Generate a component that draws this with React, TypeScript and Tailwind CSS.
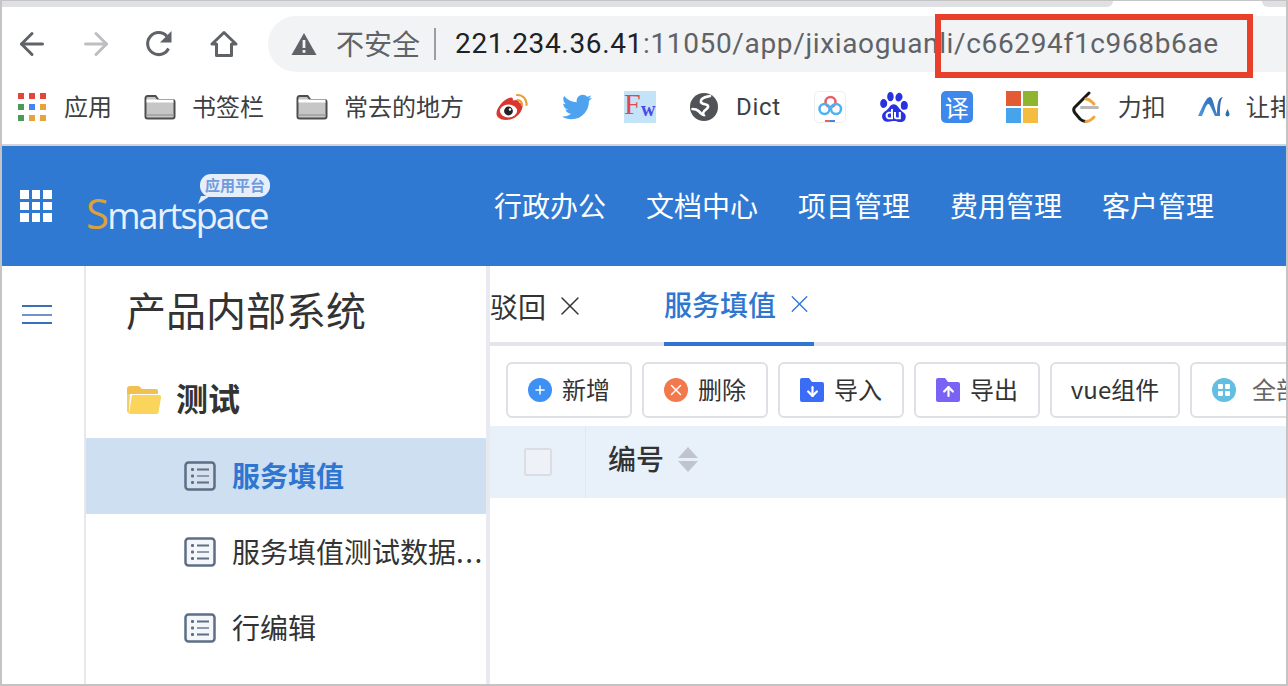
import { ArrowLeft, ArrowRight, X, Plus, ArrowDown, ArrowUp } from 'lucide-react';
import { FaTwitter } from 'react-icons/fa';
import { SiBaidu } from 'react-icons/si';

const cjk = { fontFamily: '"Noto Sans CJK SC", "Liberation Sans", sans-serif' };

function AppsIcon() {
  const colors = ['#e2483a', '#e2483a', '#e2483a', '#4c9a5a', '#4285f4', '#e8a33a', '#4c9a5a', '#e8a33a', '#e8a33a'];
  return (
    <div className="grid grid-cols-3 gap-[5px] w-[28px] shrink-0">
      {colors.map((c, i) => (
        <div key={i} className="w-[6px] h-[6px]" style={{ backgroundColor: c }} />
      ))}
    </div>
  );
}

function FolderIcon() {
  return (
    <svg width="32" height="26" viewBox="0 0 32 26" className="shrink-0">
      <path d="M1.5 4a2 2 0 0 1 2-2h8l3 4h14a2 2 0 0 1 2 2v14.5a2 2 0 0 1-2 2h-25a2 2 0 0 1-2-2z" fill="#c6c6c6" stroke="#4d4d4d" strokeWidth="2" />
      <path d="M2.5 7h27" stroke="#fff" strokeWidth="3" />
      <path d="M2.5 21h27" stroke="#a8a8a8" strokeWidth="2" />
    </svg>
  );
}

function ListIcon({ dark }: { dark?: boolean }) {
  return (
    <svg width="32" height="30" viewBox="0 0 32 30" className="shrink-0">
      <rect x="1.5" y="1.5" width="29" height="27" rx="3" fill={dark ? '#d5e1ef' : '#f4f6f9'} stroke="#5c6f86" strokeWidth="2.5" />
      <g fill="#5c6f86">
        <rect x="7" y="7" width="3" height="3" rx="1" />
        <rect x="7" y="13.5" width="3" height="3" rx="1" />
        <rect x="7" y="20" width="3" height="3" rx="1" />
        <rect x="13" y="7.5" width="12" height="2" />
        <rect x="13" y="14" width="12" height="2" fill="#8d9bad" />
        <rect x="13" y="20.5" width="12" height="2" />
      </g>
    </svg>
  );
}

function ToolButton({ icon, label, w }: { icon?: React.ReactNode; label: string; w: string }) {
  return (
    <div className={`${w} h-[56px] shrink-0 flex items-center justify-center gap-[10px] bg-white border-2 border-[#dfe0e6] rounded-[6px] text-[24px] text-[#333]`}>
      {icon}
      <span className="pb-[3px]">{label}</span>
    </div>
  );
}

function FileIcon({ color, up }: { color: string; up?: boolean }) {
  return (
    <div className="relative w-[24px] h-[24px] shrink-0">
      <svg width="24" height="24" viewBox="0 0 24 24">
        <path d="M0 2a2 2 0 0 1 2-2h7l3 4h10a2 2 0 0 1 2 2v16a2 2 0 0 1-2 2H2a2 2 0 0 1-2-2z" fill={color} />
      </svg>
      <div className="absolute inset-0 flex items-center justify-center text-white pt-[3px]">
        {up ? <ArrowUp size={15} strokeWidth={3.5} /> : <ArrowDown size={15} strokeWidth={3.5} />}
      </div>
    </div>
  );
}

function CloudIcon() {
  return (
    <div className="w-[32px] h-[32px] shrink-0 border border-[#eeeeee] rounded-[5px] flex items-center justify-center">
      <svg width="28" height="30" viewBox="0 0 28 30">
        <circle cx="14.5" cy="10" r="5" fill="none" stroke="#e8606a" strokeWidth="2.5" />
        <circle cx="8.5" cy="17" r="5" fill="none" stroke="#4db2f0" strokeWidth="2.5" />
        <circle cx="20" cy="17" r="5" fill="none" stroke="#4db2f0" strokeWidth="2.5" />
        <rect x="9" y="28" width="5" height="2" fill="#e8606a" />
        <rect x="14" y="28" width="5" height="2" fill="#4585e0" />
      </svg>
    </div>
  );
}

function WeiboIcon() {
  return (
    <svg width="32" height="28" viewBox="0 0 32 28" className="shrink-0">
      <path d="M13 5c3-1.5 4.5 0 3.8 2.6 3.5-1.3 6.2-.8 6.2 2 3.4.9 4.3 3.4 3 6.4C24 22.5 17 27 10 27 4 27 .5 24 .5 20.5.5 15 7 7 13 5z" fill="#d8362f" />
      <ellipse cx="12.5" cy="18" rx="8.6" ry="6.4" fill="#fff" />
      <circle cx="12.5" cy="18" r="4.4" fill="#222" />
      <circle cx="14" cy="16.5" r="1.2" fill="#fff" />
      <path d="M21 2a9 9 0 0 1 9.5 10M21.5 7a4.5 4.5 0 0 1 4.5 5" fill="none" stroke="#ea9f3a" strokeWidth="2.2" strokeLinecap="round" />
    </svg>
  );
}

function GlobeIcon() {
  return (
    <svg width="28" height="28" viewBox="0 0 28 28" className="shrink-0">
      <circle cx="14" cy="14" r="14" fill="#4f5256" />
      <path d="M20 3c-3 1-8 1-9 4.500s4 3.500 6 4.500 1 3-1 4.500-4 3-2.500 5.500c-1 0-3-2-5-4s-5-2-6-2" fill="none" stroke="#fff" strokeWidth="2.6" strokeLinecap="round" />
    </svg>
  );
}

function LeetIcon() {
  return (
    <svg width="28" height="32" viewBox="0 0 28 32" className="shrink-0">
      <path d="M17 2 3 16c-2 2-1.500 4 0 6l5 6c2 2 4 2.500 6 2.500" fill="none" stroke="#1a1a1a" strokeWidth="3" strokeLinecap="round" />
      <path d="M14 30.500c2.500 0 4.500-1 6-2.500l2-2M14 8c2 0 4 1 6 3l2 2" fill="none" stroke="#f0a63c" strokeWidth="3" strokeLinecap="round" />
      <rect x="8" y="15" width="19" height="3" rx="1.500" fill="#b8b8b8" />
    </svg>
  );
}

function NetlifyIcon() {
  return (
    <svg width="32" height="26" viewBox="0 0 32 26" className="shrink-0">
      <defs>
        <linearGradient id="ng" x1="0" y1="1" x2="1" y2="0">
          <stop offset="0" stopColor="#4a9be8" />
          <stop offset="1" stopColor="#2a5fa6" />
        </linearGradient>
      </defs>
      <path d="M0 22 C5 12 8 3 12 3c3 0 4 10 7 17 0-8 1-17 6-17-3 3-3 10-3 19h-5C14 16 12 10 10.500 10 8 10 6 18 4 22z" fill="url(#ng)" />
      <path d="M29.500 15c1.500 3 2 4.500 2 5.500a2 2 0 0 1-4 0c0-1 .8-2.500 2-5.500z" fill="#2a6fa8" />
    </svg>
  );
}

export default function App() {
  return (
    <div className="relative w-[1288px] h-[686px] overflow-hidden bg-white border-2 border-t border-[#c4c4c4] flex flex-col" style={cjk}>
      {/* 탭 스트립 */}
      <div className="h-[6px] shrink-0 flex">
        <div className="w-[1111px] bg-[#dfe0e4] rounded-br-[8px]" />
        <div className="w-[149px]" />
        <div className="flex-1 bg-[#dfe0e4] rounded-bl-[8px]" />
      </div>

      {/* 주소창 줄 */}
      <div className="h-[56px] mt-[9px] shrink-0 flex items-center pl-[12px]">
        <ArrowLeft size={36} strokeWidth={2} className="text-[#5f6368] shrink-0" />
        <ArrowRight size={36} strokeWidth={2} className="text-[#bcbec2] shrink-0 ml-[28px]" />
        <svg width="30" height="30" viewBox="0 0 30 30" className="shrink-0 ml-[30px]">
          <path d="M24.500 19.500A11 11 0 1 1 22.800 7.200" fill="none" stroke="#5f6368" strokeWidth="3" />
          <path d="M27.500 2v11.500H16z" fill="#5f6368" />
        </svg>
        <svg width="28" height="28" viewBox="0 0 28 28" className="shrink-0 ml-[36px]">
          <path d="M14 2.500 2 14h4.500v11.500h15V14H26z" fill="none" stroke="#5f6368" strokeWidth="3" strokeLinejoin="round" />
        </svg>
        <div className="ml-[30px] h-[56px] flex-1 min-w-0 rounded-l-[28px] bg-[#f1f3f4] flex items-center pl-[23px] whitespace-nowrap overflow-hidden">
          <svg width="26" height="24" viewBox="0 0 26 24" className="shrink-0">
            <path d="M13 1 25.500 23H.5z" fill="#5f6368" />
            <rect x="11.600" y="8" width="2.800" height="8" fill="#f1f3f4" />
            <rect x="11.600" y="18" width="2.800" height="2.800" fill="#f1f3f4" />
          </svg>
          <span className="ml-[19px] pb-[2px] text-[28px] text-[#5f6368]">不安全</span>
          <div className="ml-[14px] w-[2px] h-[32px] bg-[#9a9da1] shrink-0" />
          <span className="ml-[19px] text-[28px] tracking-[0.65px] text-[#5f6368]" style={{ fontFamily: 'Roboto, sans-serif' }}>
            <span className="text-[#202124]">221.234.36.41</span>:11050/app/jixiaoguanli/c66294f1c968b6ae
          </span>
        </div>
      </div>

      {/* 북마크 줄 */}
      <div className="h-[74px] shrink-0 border-b-2 border-[#d4d4d8] flex items-center pl-[16px] pb-[3px] whitespace-nowrap overflow-hidden text-[24px] text-[#3c4043]">
        <AppsIcon />
        <span className="ml-[18px] pb-[2px]">应用</span>
        <div className="ml-[32px]"><FolderIcon /></div>
        <span className="ml-[16px] pb-[2px]">书签栏</span>
        <div className="ml-[32px]"><FolderIcon /></div>
        <span className="ml-[16px] pb-[2px]">常去的地方</span>
        <div className="ml-[32px]"><WeiboIcon /></div>
        <FaTwitter size={30} color="#4fa3ee" className="ml-[34px] shrink-0" />
        <div className="ml-[32px] w-[32px] h-[32px] shrink-0 bg-[#c4e2f8] flex items-end overflow-hidden" style={{ fontFamily: '"Liberation Serif", serif' }}>
          <span className="w-[17px] pb-[4px] text-[30px] text-[#dd4a4a] leading-none">F</span>
          <span className="w-[15px] pb-[4px] text-[20px] font-bold text-[#4a4ae8] leading-none">w</span>
        </div>
        <div className="ml-[34px]"><GlobeIcon /></div>
        <span className="ml-[18px] tracking-[0.7px]" style={{ fontFamily: 'Roboto, sans-serif' }}>Dict</span>
        <div className="ml-[33px]"><CloudIcon /></div>
        <SiBaidu size={30} color="#2932e1" className="ml-[33px] shrink-0" />
        <div className="ml-[32px] w-[32px] h-[32px] shrink-0 rounded-[5px] bg-[#3d88ea] text-white text-[24px] flex items-center justify-center">译</div>
        <div className="ml-[33px] w-[32px] h-[32px] shrink-0 grid grid-cols-2 gap-[2px]">
          <div className="bg-[#e35b35]" />
          <div className="bg-[#8db530]" />
          <div className="bg-[#47a4ea]" />
          <div className="bg-[#f4bd3f]" />
        </div>
        <div className="ml-[34px]"><LeetIcon /></div>
        <span className="ml-[18px] pb-[2px]">力扣</span>
        <div className="ml-[32px]"><NetlifyIcon /></div>
        <span className="ml-[16px] pb-[2px]">让排</span>
      </div>

      {/* 앱 헤더 */}
      <div className="h-[120px] shrink-0 bg-[#3079d3] flex items-center pl-[18px] text-white">
        <div className="grid grid-cols-3 gap-[3px] w-[32px] shrink-0">
          {Array.from({ length: 9 }).map((_, i) => (
            <div key={i} className="w-[8.6px] h-[8.6px] bg-white" />
          ))}
        </div>
        <div className="relative ml-[34px] w-[186px] h-[80px] shrink-0">
          <div className="absolute left-[114px] top-[8px] w-[70px] h-[23px] rounded-[11px] bg-[#e6eefa] text-[#6f9bdc] text-[15px] font-bold leading-[22px] text-center whitespace-nowrap">应用平台</div>
          <svg width="12" height="8" viewBox="0 0 12 8" className="absolute left-[112px] top-[30px]">
            <path d="M3 0h9L0 8z" fill="#e6eefa" />
          </svg>
          <div className="absolute left-0 top-[29px] text-[36px] tracking-[-1.9px] leading-[36px] text-[#e9f0fb] whitespace-nowrap" style={{ fontFamily: '"Open Sans", sans-serif' }}>
            <span className="text-[#dba23c] text-[42px] leading-[36px]">S</span>martspace
          </div>
        </div>
        <div className="ml-[222px] pb-[2px] flex gap-[40px] text-[28px] whitespace-nowrap">
          <span>行政办公</span>
          <span>文档中心</span>
          <span>项目管理</span>
          <span>费用管理</span>
          <span>客户管理</span>
        </div>
      </div>

      {/* 본문 */}
      <div className="flex-1 min-h-0 flex">
        <div className="w-[84px] shrink-0 border-r-2 border-[#e8e8ec] pl-[20px] pt-[39px]">
          <div className="w-[30px] flex flex-col gap-[6.5px]">
            <div className="h-[2px] bg-[#3a70b8]" />
            <div className="h-[2px] bg-[#6f94c8]" />
            <div className="h-[2px] bg-[#3a70b8]" />
          </div>
        </div>

        <div className="w-[400px] shrink-0 border-r-4 border-[#e9eaf0] box-content flex flex-col">
          <div className="pl-[40px] pt-[14px] h-[96px] text-[40px] leading-[58px] text-[#333]">产品内部系统</div>
          <div className="h-[76px] pl-[40px] flex items-center">
            <svg width="36" height="30" viewBox="0 0 36 30" className="shrink-0">
              <path d="M1 4a3 3 0 0 1 3-3h9l3 3h14a2 2 0 0 1 2 2v3H1z" fill="#f0c14f" />
              <path d="M1 9h3l-1 19H3a2 2 0 0 1-2-2z" fill="#f3cf6e" />
              <path d="M6 10h27a2 2 0 0 1 2 2.400l-2.500 15a2 2 0 0 1-2 1.600H3z" fill="#fbd45c" />
            </svg>
            <span className="ml-[14px] pb-[6px] text-[32px] font-bold text-[#333]">测试</span>
          </div>
          <div className="h-[76px] bg-[#cddff0] pl-[98px] flex items-center">
            <ListIcon dark />
            <span className="ml-[16px] pb-[2px] text-[28px] font-bold text-[#2f76d1]">服务填值</span>
          </div>
          <div className="h-[76px] pl-[98px] flex items-center">
            <ListIcon />
            <span className="ml-[16px] pb-[2px] text-[28px] text-[#333] whitespace-nowrap">服务填值测试数据<span className="tracking-[1.5px]">...</span></span>
          </div>
          <div className="h-[76px] pl-[98px] flex items-center">
            <ListIcon />
            <span className="ml-[16px] pb-[2px] text-[28px] text-[#333]">行编辑</span>
          </div>
        </div>

        <div className="flex-1 min-w-0 overflow-hidden">
          <div className="h-[80px] border-b-4 border-[#e4e5ec] flex whitespace-nowrap">
            <div className="flex items-center h-[80px] text-[28px] text-[#333]">
              <span>驳回</span>
              <X size={32} strokeWidth={1.1} className="ml-[8px]" />
            </div>
            <div className="ml-[78px] w-[150px] h-[80px] border-b-4 border-[#2f76d1] flex items-center text-[28px] text-[#2f76d1]">
              <span className="font-medium">服务填值</span>
              <X size={32} strokeWidth={1.1} className="ml-[9px]" />
            </div>
          </div>
          <div className="flex gap-[10px] pl-[16px] pt-[16px] whitespace-nowrap">
            <ToolButton w="w-[126px]" label="新增" icon={
              <div className="w-[24px] h-[24px] rounded-full bg-[#3e90f5] text-white flex items-center justify-center"><Plus size={14} strokeWidth={2.5} /></div>
            } />
            <ToolButton w="w-[126px]" label="删除" icon={
              <div className="w-[24px] h-[24px] rounded-full bg-[#f2784e] text-white flex items-center justify-center"><X size={18} strokeWidth={2} /></div>
            } />
            <ToolButton w="w-[126px]" label="导入" icon={<FileIcon color="#3a6cf6" />} />
            <ToolButton w="w-[126px]" label="导出" icon={<FileIcon color="#7a62f4" up />} />
            <ToolButton w="w-[130px]" label="vue组件" />
            <div className="w-[150px] h-[56px] shrink-0 flex items-center pl-[20px] bg-white border-2 border-[#dfe0e6] rounded-[6px] text-[24px] text-[#666]">
              <div className="w-[24px] h-[24px] rounded-full bg-[#62bfe0] grid grid-cols-2 gap-[2px] p-[6px] shrink-0">
                <div className="bg-white rounded-[1px]" />
                <div className="bg-white rounded-[1px]" />
                <div className="bg-white rounded-[1px]" />
                <div className="bg-white rounded-[1px]" />
              </div>
              <span className="ml-[16px] pb-[3px]">全部</span>
            </div>
          </div>
          <div className="mt-[8px] h-[72px] bg-[#e8f0fa] flex items-center">
            <div className="w-[96px] h-full shrink-0 border-r border-[#e2e8f2] pl-[34px] flex items-center">
              <div className="w-[28px] h-[28px] bg-[#eef2f8] border-2 border-[#dcdde2] rounded-[3px]" />
            </div>
            <span className="ml-[22px] pb-[9px] text-[28px] font-medium text-[#333]">编号</span>
            <div className="ml-[14px] pb-[5px] flex flex-col gap-[3px]">
              <div className="w-0 h-0 border-l-[10px] border-r-[10px] border-b-[11px] border-l-transparent border-r-transparent border-b-[#c0c4cc]" />
              <div className="w-0 h-0 border-l-[10px] border-r-[10px] border-t-[11px] border-l-transparent border-r-transparent border-t-[#c0c4cc]" />
            </div>
          </div>
        </div>
      </div>

      {/* 빨간 강조 박스 */}
      <div className="absolute left-[933px] top-[13px] w-[318px] h-[64px] border-[6px] border-[#e8402a]" />
    </div>
  );
}
